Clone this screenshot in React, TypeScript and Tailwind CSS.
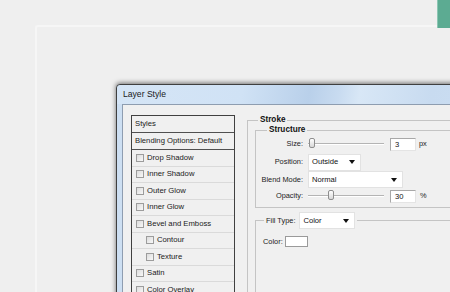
import type { ReactNode } from "react";

const ITEMS: { label: string; indent?: boolean }[] = [
  { label: "Drop Shadow" },
  { label: "Inner Shadow" },
  { label: "Outer Glow" },
  { label: "Inner Glow" },
  { label: "Bevel and Emboss" },
  { label: "Contour", indent: true },
  { label: "Texture", indent: true },
  { label: "Satin" },
  { label: "Color Overlay" },
  { label: "Gradient Overlay" },
];

function Checkbox() {
  return (
    <span className="w-[8px] h-[8px] shrink-0 border border-[#9c9c9c] bg-[linear-gradient(135deg,#dcdcdc,#f8f8f8)]" />
  );
}

function Dropdown({ value, width }: { value: string; width: string }) {
  return (
    <div
      className={`${width} h-[17px] bg-white border border-[#e2e2e2] flex items-center justify-between pl-[3px] pr-[5px] text-[7.6px] text-[#111]`}
    >
      <span>{value}</span>
      <svg width="6" height="4" viewBox="0 0 6 4">
        <path d="M0 0h6L3 4z" fill="#111" />
      </svg>
    </div>
  );
}

function Slider({ pos }: { pos: string }) {
  return (
    <div className="w-[76px] h-[12px] flex items-center">
      <div className="relative w-full h-[2px] border-t border-[#b4b4b4] bg-white">
        <span
          className={`absolute ${pos} -top-[6px] w-[6px] h-[10px] rounded-[2px] border border-[#8e8e8e] bg-[linear-gradient(#ffffff,#d8d8d8)]`}
        />
      </div>
    </div>
  );
}

function NumberBox({ value }: { value: string }) {
  return (
    <div className="w-[26px] h-[13px] bg-white border border-t-[#a8a8a8] border-l-[#a8a8a8] border-r-[#e4e4e4] border-b-[#e4e4e4] pl-[4px] text-[7.6px] leading-[11px] text-[#111]">
      {value}
    </div>
  );
}

function Row({ label, h, children }: { label: string; h: string; children: ReactNode }) {
  return (
    <div className={`${h} flex items-center`}>
      <span className="w-[52px] shrink-0 text-right pr-[5px] text-[7.4px] text-[#222]">{label}</span>
      {children}
    </div>
  );
}

export default function App() {
  return (
    <div className="relative w-[450px] h-[292px] overflow-hidden bg-[#efefef] font-['Liberation_Sans',Arial,sans-serif]">
      {/* cropped swatch in the corner */}
      <div className="absolute right-0 top-0 w-[13px] h-[28px] bg-[#5cab92] border-l border-[#8cc6b3]" />

      <div className="pl-[35px] pt-[25px]">
        <div className="w-[520px] h-[360px] border-l-2 border-t-2 border-[#f6f6f6] rounded-tl-[3px] pl-[79px] pt-[57px]">
          {/* Dialog */}
          <div className="w-[420px] h-[260px] border border-[#3f3f3f] rounded-tl-[4px] shadow-[0_-1px_5px_rgba(0,0,0,0.55)] bg-[#cddff2] flex flex-col">
            <div className="h-[19px] shrink-0 flex items-center pl-[6px] rounded-tl-[4px] bg-[linear-gradient(100deg,#d5e5f6_0%,#d0e2f5_30%,#b9d0ea_46%,#c8dbf0_53%,#d8e7f6_58%,#c8dbf0_75%,#cde0f4_100%)]">
              <span className="text-[8.6px] text-[#1a1a1a]">Layer Style</span>
            </div>

            <div className="flex-1 flex pl-[5px]">
              <div className="flex-1 bg-[#f0f0f0] border-l border-t border-[#8e9db0] flex pl-[8px] pt-[10px] gap-[12px]">
                {/* Styles list */}
                <div className="w-[104px] shrink-0 self-start border border-[#404040] bg-[#f0f0f0] text-[7.7px] text-[#1a1a1a]">
                  <div className="h-[17px] flex items-center pl-[3px] border-b-[1.5px] border-[#505050]">Styles</div>
                  <div className="h-[17px] flex items-center pl-[3px] border-b-[1.5px] border-[#505050]">
                    Blending Options: Default
                  </div>
                  {ITEMS.map((it) => (
                    <div
                      key={it.label}
                      className={`h-[16.5px] flex items-center gap-[3px] border-b border-[#dadada] ${
                        it.indent ? "pl-[14px]" : "pl-[4px]"
                      }`}
                    >
                      <Checkbox />
                      <span>{it.label}</span>
                    </div>
                  ))}
                </div>

                {/* Stroke settings */}
                <fieldset className="flex-1 self-start border-l border-t border-[#c4c4c4] pl-[7px]">
                  <legend className="ml-[3px] px-[2px] text-[8.2px] leading-[10px] font-bold text-[#111]">
                    Stroke
                  </legend>

                  <fieldset className="border-l border-t border-b border-[#c4c4c4] pb-[3px]">
                    <legend className="ml-[11px] px-[2px] text-[8.2px] leading-[10px] font-bold text-[#111]">
                      Structure
                    </legend>
                    <Row label="Size:" h="h-[18px]">
                      <Slider pos="left-[1px]" />
                      <div className="ml-[6px]">
                        <NumberBox value="3" />
                      </div>
                      <span className="ml-[3px] text-[7.4px] text-[#222]">px</span>
                    </Row>
                    <Row label="Position:" h="h-[18px]">
                      <Dropdown value="Outside" width="w-[53px]" />
                    </Row>
                    <Row label="Blend Mode:" h="h-[17px]">
                      <Dropdown value="Normal" width="w-[95px]" />
                    </Row>
                    <Row label="Opacity:" h="h-[16px]">
                      <Slider pos="left-[20px]" />
                      <div className="ml-[6px]">
                        <NumberBox value="30" />
                      </div>
                      <span className="ml-[4px] text-[7.4px] text-[#222]">%</span>
                    </Row>
                  </fieldset>

                  <fieldset className="mt-[4px] border-l border-t border-[#c4c4c4] pl-[7px] pt-[7px] h-[120px]">
                    <legend className="ml-[1px] px-[2px] flex items-center gap-[4px]">
                      <span className="text-[7.4px] text-[#222]">Fill Type:</span>
                      <Dropdown value="Color" width="w-[56px]" />
                    </legend>
                    <div className="flex items-center gap-[2px]">
                      <span className="text-[7.4px] text-[#222]">Color:</span>
                      <span className="w-[23px] h-[11px] bg-white border border-[#9a9a9a]" />
                    </div>
                  </fieldset>
                </fieldset>
              </div>
            </div>
          </div>
        </div>
      </div>
    </div>
  );
}
